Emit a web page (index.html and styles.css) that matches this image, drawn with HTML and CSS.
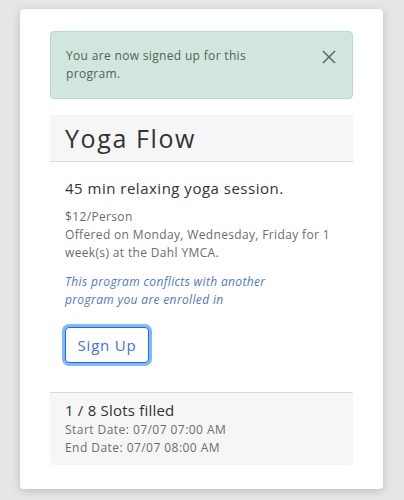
FILE: index.html
```html
<!DOCTYPE html>
<html lang="en">
<head>
<meta charset="utf-8">
<title>Yoga Flow</title>
<link rel="stylesheet" href="styles.css">
</head>
<body>
<div class="page">
  <div class="panel">
    <div class="alert" role="alert">
      <span class="alert-text">You are now signed up for this program.</span>
      <button class="alert-close" aria-label="Close">
        <svg width="14" height="14" viewBox="0 0 14 14"><path d="M1 1 L13 13 M13 1 L1 13" stroke="#5f6b65" stroke-width="1.6" fill="none"/></svg>
      </button>
    </div>
    <div class="card">
      <div class="card-header"><h2 class="card-title">Yoga Flow</h2></div>
      <div class="card-body">
        <p class="desc">45 min relaxing yoga session.</p>
        <p class="meta">$12/Person<br>Offered on Monday, Wednesday, Friday for 1 week(s) at the Dahl YMCA.</p>
        <p class="conflict">This program conflicts with another program you are enrolled in</p>
        <button class="btn">Sign Up</button>
      </div>
      <div class="card-footer">
        <div class="slots">1 / 8 Slots filled</div>
        <div class="dates">Start Date: 07/07 07:00 AM<br>End Date: 07/07 08:00 AM</div>
      </div>
    </div>
  </div>
</div>
</body>
</html>
```
FILE: styles.css
```css
* { box-sizing: border-box; }
html, body { margin: 0; padding: 0; }
body {
  background: #e6e6e6;
  font-family: "Open Sans", "Noto Sans", sans-serif;
  color: #333;
  width: 404px;
  height: 500px;
  overflow: hidden;
}
.page { padding: 9px 21px 0 20px; }
.panel {
  background: #fff;
  border-radius: 4px;
  box-shadow: 0 2px 10px rgba(0,0,0,0.18);
  padding: 22px 30px 24px;
}
.alert {
  display: flex;
  justify-content: space-between;
  align-items: flex-start;
  background: #d1e7dd;
  border: 1px solid #b8dbcb;
  border-radius: 4px;
  padding: 15px 16px 15px 15px;
  color: #51635a;
  font-size: 12px;
  line-height: 18px;
  letter-spacing: 0.33px;
}
.alert-text { width: 215px; }
.alert-close {
  border: 0;
  background: none;
  padding: 0;
  margin-top: 3px;
  width: 14px;
  height: 14px;
  display: flex;
}
.card { margin-top: 16px; }
.card-header {
  background: #f6f6f6;
  border-bottom: 1px solid #d9d9d9;
  padding: 8px 15px 8px;
}
.card-title {
  margin: 0;
  font-weight: 400;
  font-size: 25px;
  line-height: 30px;
  letter-spacing: 1.6px;
  color: #333;
}
.card-body { padding: 15px 15px 29px; }
.desc { margin: 0; font-size: 15px; line-height: 22px; color: #333; letter-spacing: 0.5px; }
.meta { margin: 9px 0 0; font-size: 12px; line-height: 18px; color: #6c6c6c; letter-spacing: 0.35px; }
.conflict { margin: 11px 0 0; max-width: 240px; font-size: 12px; line-height: 18px; color: #4f78c6; font-style: italic; letter-spacing: 0.35px; }
.btn {
  margin-top: 18px;
  font-family: inherit;
  font-size: 15px;
  letter-spacing: 0.8px;
  color: #4070f4;
  background: #fff;
  border: 1px solid #0d6efd;
  border-radius: 4px;
  height: 36px;
  width: 84px;
  padding: 0;
  box-shadow: 0 0 0 3px #86b7fe;
}
.card-footer {
  background: #f6f6f6;
  border-top: 1px solid #d9d9d9;
  border-radius: 0 0 4px 4px;
  padding: 6px 15px 8px;
}
.slots { font-size: 15px; line-height: 22px; color: #333; letter-spacing: 0.2px; }
.dates { font-size: 12px; line-height: 18px; color: #6c6c6c; letter-spacing: 0.45px; }
```
